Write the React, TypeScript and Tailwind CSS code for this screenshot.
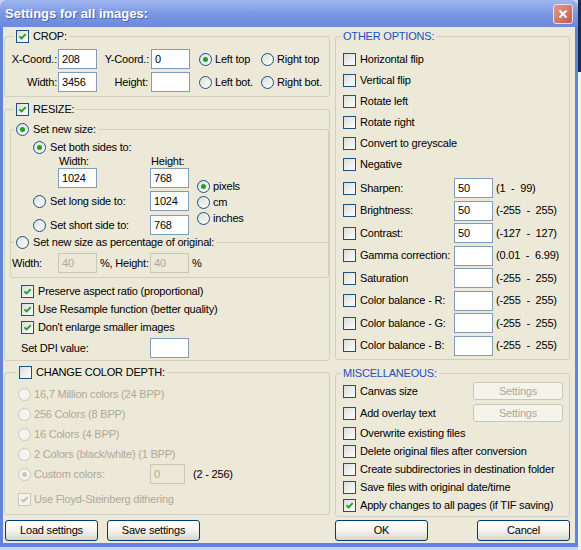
import React from 'react';

// Windows XP style "Settings for all images" dialog

function CheckBox({ checked = false, disabled = false }: { checked?: boolean; disabled?: boolean }) {
    return (
        <span
            className={`flex h-[13px] w-[13px] shrink-0 items-center justify-center border ${
                disabled ? 'border-[#cac8bb] bg-[#f4f3ee]' : 'border-[#1c5180] bg-linear-to-br from-[#dcdcd7] to-white'
            }`}
        >
            {checked && (
                <svg width="9" height="9" viewBox="0 0 9 9">
                    <path d="M1.4 4.3 L3.6 6.5 L7.7 2.1" fill="none" stroke={disabled ? '#c2c0b0' : '#21a121'} strokeWidth="1.9" />
                </svg>
            )}
        </span>
    );
}

function Radio({ on = false, disabled = false }: { on?: boolean; disabled?: boolean }) {
    return (
        <span
            className={`flex h-[13px] w-[13px] shrink-0 items-center justify-center rounded-full border ${
                disabled ? 'border-[#cac8bb] bg-[#f4f3ee]' : 'border-[#1c5180] bg-linear-to-br from-[#dcdcd7] to-white'
            }`}
        >
            {on && <span className={`h-[5px] w-[5px] rounded-full ${disabled ? 'bg-[#cac8bb]' : 'bg-[#21a121]'}`} />}
        </span>
    );
}

function Box({ value = '', disabled = false, className = 'w-[39px]' }: { value?: string; disabled?: boolean; className?: string }) {
    return (
        <div
            className={`flex h-[20px] shrink-0 items-center border pl-[3px] ${
                disabled ? 'border-[#c9c7ba] bg-[#ece9d8] text-[#aca899]' : 'border-[#7f9db9] bg-white text-black'
            } ${className}`}
        >
            {value}
        </div>
    );
}

function Btn({ children }: { children: React.ReactNode }) {
    return (
        <div className="flex h-[21px] w-[93px] items-center justify-center rounded-[3px] border border-[#003c74] bg-linear-to-b from-white via-[#f4f3ee] to-[#d9d5c9]">
            {children}
        </div>
    );
}

function GreyBtn({ children }: { children: React.ReactNode }) {
    return (
        <div className="flex h-[18px] w-[90px] items-center justify-center rounded-[3px] border border-[#c9c7ba] bg-[#f5f4ea] text-[#aca899]">
            {children}
        </div>
    );
}

const simpleOptions = ['Horizontal flip', 'Vertical flip', 'Rotate left', 'Rotate right', 'Convert to greyscale', 'Negative'];

const valueOptions = [
    { label: 'Sharpen:', value: '50', range: '(1  -  99)' },
    { label: 'Brightness:', value: '50', range: '(-255  -  255)' },
    { label: 'Contrast:', value: '50', range: '(-127  -  127)' },
    { label: 'Gamma correction:', value: '', range: '(0.01  -  6.99)' },
    { label: 'Saturation', value: '', range: '(-255  -  255)' },
    { label: 'Color balance - R:', value: '', range: '(-255  -  255)' },
    { label: 'Color balance - G:', value: '', range: '(-255  -  255)' },
    { label: 'Color balance - B:', value: '', range: '(-255  -  255)' },
];

const miscOptions = [
    { label: 'Overwrite existing files', checked: false },
    { label: 'Delete original files after conversion', checked: false },
    { label: 'Create subdirectories in destination folder', checked: false },
    { label: 'Save files with original date/time', checked: false },
    { label: 'Apply changes to all pages (if TIF saving)', checked: true },
];

const depthOptions = ['16,7 Million colors (24 BPP)', '256 Colors (8 BPP)', '16 Colors (4 BPP)', '2 Colors (black/white) (1 BPP)'];

export default function App() {
    return (
        <div className="flex h-[550px] w-[581px] overflow-hidden bg-[#c9d3ea] font-['Liberation_Sans',Arial,sans-serif] text-[11px] leading-[13px] tracking-[-0.2px] text-black">
            <div className="flex h-[547px] w-[578px] flex-col">
                {/* Title bar */}
                <div className="flex h-[27px] shrink-0 items-center justify-between rounded-t-[7px] bg-linear-to-b from-[#a0b7ef] via-[#7a97e3] to-[#6a8ade] pl-[5px] pr-[5px]">
                    <span className="text-[13px] font-bold tracking-normal text-white [text-shadow:1px_1px_0_#4a64b0]">Settings for all images:</span>
                    <div className="flex h-[20px] w-[20px] items-center justify-center rounded-[3px] border border-[#f0e0dc] bg-linear-to-br from-[#e09a8c] to-[#c45c4c]">
                        <svg width="10" height="10" viewBox="0 0 10 10">
                            <path d="M1.5 1.5 L8.5 8.5 M8.5 1.5 L1.5 8.5" stroke="white" strokeWidth="2" />
                        </svg>
                    </div>
                </div>

                {/* Body */}
                <div className="flex flex-1 gap-[5px] border-x-[3px] border-b-[4px] border-[#6383dc] bg-[#ece9d8] pl-[1px] pt-[3px]">
                    {/* Left column */}
                    <div className="flex w-[326px] flex-col">
                        {/* CROP */}
                        <fieldset className="min-w-0 rounded-[3px] border border-[#d0d0bf] pb-[4px]">
                            <legend className="ml-[9px] flex h-[13px] items-center gap-[4px] px-[2px]">
                                <CheckBox checked />
                                CROP:
                            </legend>
                            <div className="mt-[6px] flex h-[20px] items-center">
                                <span className="w-[53px] pr-[1px] text-right">X-Coord.:</span>
                                <Box value="208" />
                                <span className="w-[54px] pr-[2px] text-right">Y-Coord.:</span>
                                <Box value="0" />
                                <span className="ml-[9px] flex w-[62px] items-center gap-[3px]">
                                    <Radio on />
                                    Left top
                                </span>
                                <span className="flex items-center gap-[3px]">
                                    <Radio />
                                    Right top
                                </span>
                            </div>
                            <div className="mt-[3px] flex h-[20px] items-center">
                                <span className="w-[53px] pr-[1px] text-right">Width:</span>
                                <Box value="3456" />
                                <span className="w-[54px] pr-[3px] text-right">Height:</span>
                                <Box />
                                <span className="ml-[9px] flex w-[62px] items-center gap-[3px]">
                                    <Radio />
                                    Left bot.
                                </span>
                                <span className="flex items-center gap-[3px]">
                                    <Radio />
                                    Right bot.
                                </span>
                            </div>
                        </fieldset>

                        {/* RESIZE */}
                        <fieldset className="mt-[6px] min-w-0 rounded-[3px] border border-[#d0d0bf] pb-[2px]">
                            <legend className="ml-[9px] flex h-[13px] items-center gap-[4px] px-[2px]">
                                <CheckBox checked />
                                RESIZE:
                            </legend>

                            <fieldset className="ml-[5px] mt-[7px] w-[319px] min-w-0 rounded-t-[3px] border border-b-0 border-[#d0d0bf] pb-[8px]">
                                <legend className="ml-[3px] flex h-[13px] items-center gap-[4px] px-[2px]">
                                    <Radio on />
                                    Set new size:
                                </legend>
                                <div className="mt-[5px] flex">
                                    <div className="flex w-[178px] flex-col">
                                        <div className="flex h-[13px] items-center gap-[4px] pl-[22px]">
                                            <Radio on />
                                            Set both sides to:
                                        </div>
                                        <div className="flex h-[14px] items-end pl-[47px]">
                                            <span className="w-[92px] pl-[1px]">Width:</span>
                                            <span className="pl-[1px]">Height:</span>
                                        </div>
                                        <div className="flex h-[20px] pl-[47px]">
                                            <Box value="1024" />
                                            <Box value="768" className="ml-[53px] w-[39px]" />
                                        </div>
                                        <div className="mt-[3px] flex h-[20px] items-center pl-[22px]">
                                            <span className="flex w-[117px] items-center gap-[4px]">
                                                <Radio />
                                                Set long side to:
                                            </span>
                                            <Box value="1024" />
                                        </div>
                                        <div className="mt-[4px] flex h-[20px] items-center pl-[22px]">
                                            <span className="flex w-[117px] items-center gap-[4px]">
                                                <Radio />
                                                Set short side to:
                                            </span>
                                            <Box value="768" />
                                        </div>
                                    </div>
                                    <div className="ml-[8px] flex flex-col pt-[37px]">
                                        {['pixels', 'cm', 'inches'].map((u, i) => (
                                            <div key={u} className="flex h-[16px] items-center gap-[3px]">
                                                <Radio on={i === 0} />
                                                {u}
                                            </div>
                                        ))}
                                    </div>
                                </div>
                            </fieldset>

                            <fieldset className="-mt-[7px] ml-[5px] w-[319px] min-w-0 rounded-b-[3px] border border-[#d0d0bf] pb-[4px]">
                                <legend className="ml-[3px] flex h-[13px] items-center gap-[4px] px-[2px]">
                                    <Radio />
                                    Set new size as percentage of original:
                                </legend>
                                <div className="mt-[4px] flex h-[20px] items-center pl-[1px]">
                                    <span className="w-[46px]">Width:</span>
                                    <Box value="40" disabled />
                                    <span className="ml-[3px] w-[50px]">%, Height:</span>
                                    <Box value="40" disabled />
                                    <span className="ml-[3px]">%</span>
                                </div>
                            </fieldset>

                            <div className="mt-[4px] flex flex-col pl-[16px]">
                                {['Preserve aspect ratio (proportional)', 'Use Resample function (better quality)', "Don't enlarge smaller images"].map((t) => (
                                    <div key={t} className="flex h-[18px] items-center gap-[4px]">
                                        <CheckBox checked />
                                        {t}
                                    </div>
                                ))}
                            </div>
                            <div className="mt-[2px] flex h-[20px] items-center pl-[16px]">
                                <span className="w-[129px]">Set DPI value:</span>
                                <Box />
                            </div>
                        </fieldset>

                        {/* CHANGE COLOR DEPTH */}
                        <fieldset className="mt-[5px] min-w-0 rounded-[3px] border border-[#d0d0bf] pb-[5px]">
                            <legend className="ml-[12px] flex h-[13px] items-center gap-[4px] px-[2px]">
                                <CheckBox />
                                CHANGE COLOR DEPTH:
                            </legend>
                            <div className="mt-[5px] flex flex-col pl-[13px] text-[#aca899]">
                                {depthOptions.map((t) => (
                                    <div key={t} className="flex h-[20px] items-center gap-[3px]">
                                        <Radio disabled />
                                        {t}
                                    </div>
                                ))}
                                <div className="flex h-[20px] items-center">
                                    <span className="flex w-[132px] items-center gap-[3px]">
                                        <Radio on disabled />
                                        Custom colors:
                                    </span>
                                    <Box value="0" disabled className="w-[35px]" />
                                    <span className="ml-[8px] text-black">(2 - 256)</span>
                                </div>
                            </div>
                            <div className="mt-[5px] flex h-[20px] items-center gap-[3px] pl-[13px] text-[#aca899]">
                                <CheckBox checked disabled />
                                Use Floyd-Steinberg dithering
                            </div>
                        </fieldset>

                        <div className="mt-[5px] flex gap-[9px] pl-[1px]">
                            <Btn>Load settings</Btn>
                            <Btn>Save settings</Btn>
                        </div>
                    </div>

                    {/* Right column */}
                    <div className="flex w-[235px] flex-col">
                        <fieldset className="min-w-0 rounded-[3px] border border-[#d0d0bf] pb-[3.5px]">
                            <legend className="ml-[5px] flex h-[13px] items-center px-[2px] text-[#214fc0]">OTHER OPTIONS:</legend>
                            <div className="mt-[6px] flex flex-col pl-[7px]">
                                {simpleOptions.map((t) => (
                                    <div key={t} className="flex h-[21px] items-center gap-[4px]">
                                        <CheckBox />
                                        {t}
                                    </div>
                                ))}
                            </div>
                            <div className="mt-[3px] flex flex-col gap-y-[2.5px] pl-[7px]">
                                {valueOptions.map((o) => (
                                    <div key={o.label} className="flex h-[20px] items-center">
                                        <span className="flex w-[111px] items-center gap-[4px]">
                                            <CheckBox />
                                            {o.label}
                                        </span>
                                        <Box value={o.value} />
                                        <span className="ml-[3px] whitespace-pre">{o.range}</span>
                                    </div>
                                ))}
                            </div>
                        </fieldset>

                        <fieldset className="mt-[7px] min-w-0 rounded-[3px] border border-[#d0d0bf] pb-[2px]">
                            <legend className="ml-[5px] flex h-[13px] items-center px-[2px] text-[#214fc0]">MISCELLANEOUS:</legend>
                            <div className="mt-[1px] flex h-[20px] items-center pl-[7px]">
                                <span className="flex w-[130px] items-center gap-[4px]">
                                    <CheckBox />
                                    Canvas size
                                </span>
                                <GreyBtn>Settings</GreyBtn>
                            </div>
                            <div className="mt-[2px] flex h-[20px] items-center pl-[7px]">
                                <span className="flex w-[130px] items-center gap-[4px]">
                                    <CheckBox />
                                    Add overlay text
                                </span>
                                <GreyBtn>Settings</GreyBtn>
                            </div>
                            <div className="mt-[1px] flex flex-col pl-[7px]">
                                {miscOptions.map((o) => (
                                    <div key={o.label} className="flex h-[18px] items-center gap-[4px]">
                                        <CheckBox checked={o.checked} />
                                        {o.label}
                                    </div>
                                ))}
                            </div>
                        </fieldset>

                        <div className="mt-[3px] flex justify-between">
                            <Btn>OK</Btn>
                            <Btn>Cancel</Btn>
                        </div>
                    </div>
                </div>
            </div>

            {/* strip of the window behind */}
            <div className="flex w-[3px] flex-col">
                <div className="h-[72px] bg-[#1d2a4d]" />
                <div className="flex-1 bg-[#f2f2f2]" />
            </div>
        </div>
    );
}
